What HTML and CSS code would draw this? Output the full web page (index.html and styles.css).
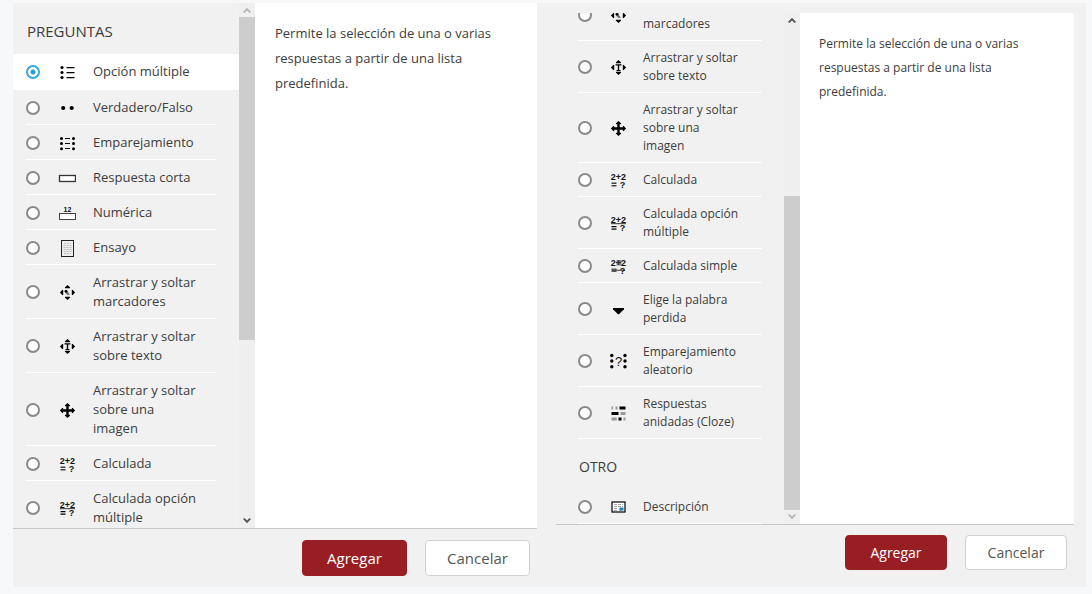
FILE: index.html
```html
<!DOCTYPE html>
<html lang="es">
<head>
<meta charset="utf-8">
<title>Agregar pregunta</title>
<link rel="stylesheet" href="styles.css">
</head>
<body>
<svg class="sprite" aria-hidden="true">
  <symbol id="multi" viewBox="-1 -1 18 18"><circle cx="3" cy="3.5" r="1.6"/><circle cx="3" cy="8.5" r="1.6"/><circle cx="3" cy="13.5" r="1.6"/><path d="M7.500 3h8v1.200h-8zM7.500 8h8v1.200h-8zM7.500 13h8v1.200h-8z"/></symbol>
  <symbol id="truefalse" viewBox="-1 -1 18 18"><circle cx="4.2" cy="8" r="2.1"/><circle cx="12.7" cy="8" r="2.1"/></symbol>
  <symbol id="match" viewBox="-1 -1 18 18"><circle cx="2.5" cy="3.5" r="1.5"/><circle cx="2.5" cy="8.5" r="1.5"/><circle cx="2.5" cy="13.8" r="1.5"/><circle cx="14.5" cy="3.5" r="1.5"/><circle cx="14.5" cy="8.5" r="1.5"/><circle cx="14.5" cy="13.8" r="1.5"/><path d="M6 3h5v1.100H6zM6 8h5v1.100H6zM6 13h5v1.100H6z"/></symbol>
  <symbol id="short" viewBox="-1 -1 18 18"><rect x=".5" y="5.5" width="16" height="6" fill="#fff" stroke="#333" stroke-width="1.3"/></symbol>
  <symbol id="numeric" viewBox="-1 -1 18 18"><rect x=".5" y="8.5" width="16" height="6" fill="#fff" stroke="#444"/><text x="8.5" y="7" text-anchor="middle" font-size="7">12</text></symbol>
  <symbol id="essay" viewBox="-1 -1 18 18"><rect x="2.5" y=".5" width="12" height="16" fill="#eee" stroke="#222"/><path d="M5 3.500h7M4.500 5.500h8M4.500 7.500h8M4.500 9.500h8M4.500 11.500h8M5 13.500h7" stroke="#bbb" stroke-dasharray="2 1"/></symbol>
  <symbol id="arrows" viewBox="0 0 16 16"><path d="M8 .4 10.700 3 10.200 3.700H5.800L5.300 3zM8 15.600 10.700 13 10.200 12.300H5.800L5.300 13zM.4 8 3 5.300 3.700 5.800v4.400l-.7.5zM15.600 8 13 5.300 12.300 5.800v4.400l.7.5z"/></symbol>
  <symbol id="ddmarker" viewBox="-1 -1 18 18"><use href="#arrows" x=".5" y=".5" width="16" height="16"/><path d="M5.500 6.500 8 6l1.500 3 1.500 1.500-2.500.5-2-2z" fill="#666"/><circle cx="7" cy="7.300" r="1.300"/></symbol>
  <symbol id="ddtext" viewBox="-1 -1 18 18"><use href="#arrows" x=".5" y=".5" width="16" height="16"/><path d="M5.500 5.300h6v1.200H9.200v5H7.800v-5H5.500zM6.500 11h4v1h-4z"/></symbol>
  <symbol id="ddimage" viewBox="-1 -1 18 18"><use href="#arrows" x=".5" y=".5" width="16" height="16"/><path d="M7.300 3h2.400v11H7.300zM3 7.300h11v2.400H3z"/></symbol>
  <symbol id="calc" viewBox="-1 -1 18 18"><text x="8.500" y="7.500" text-anchor="middle" font-size="9">2+2</text><path d="M1.500 10.500h5v1.500h-5zM1.500 13h5v1.500h-5z" fill="#444"/><text x="12.500" y="16" text-anchor="middle" font-size="9">?</text></symbol>
  <symbol id="calcmulti" viewBox="-1 -1 18 18"><text x="8.500" y="7.500" text-anchor="middle" font-size="9">2+2</text><path d="M1 8h15v1.200H1z" fill="#555"/><path d="M1.500 11h5v1.300h-5zM1.500 13.500h5v1.300h-5z"/><text x="12.500" y="16" text-anchor="middle" font-size="9">?</text></symbol>
  <symbol id="calcsimple" viewBox="-1 -1 18 18"><text x="8.500" y="7.500" text-anchor="middle" font-size="9">2+2</text><path d="M6.500 2h5v5.500h-5z" fill="#333" fill-opacity=".6"/><path d="M1.500 10.500h5v3.500h-5z" fill="#555"/><path d="M6 11.700h9v1.200H6z" fill="#555"/><text x="12.500" y="16" text-anchor="middle" font-size="9">?</text></symbol>
  <symbol id="select" viewBox="-1 -1 18 18"><path d="M3 7h11v1.200L9 13.200H8L3 8.200z"/></symbol>
  <symbol id="random" viewBox="-1 -1 18 18"><circle cx="1.800" cy="2.500" r="1.700"/><circle cx="1.800" cy="8" r="1.700"/><circle cx="1.800" cy="13.800" r="1.700"/><circle cx="15" cy="2.500" r="1.700"/><circle cx="15" cy="8" r="1.700"/><circle cx="15" cy="13.800" r="1.700"/><text class="thin" x="8.500" y="13" text-anchor="middle" font-size="13">?</text></symbol>
  <symbol id="cloze" viewBox="-1 -1 18 18"><path d="M9.500 1.500h6v3h-6zM1.500 7h7v3h-7zM8.500 12.500h3v3h-3z"/><path d="M1.500 1.500h1.700v3H1.500zM5.500 1.500h2v3h-2zM10.500 7h5v3h-5zM1.500 12.500h5.300v3H1.500zM13.500 12.500h2v3h-2z" fill="#999"/></symbol>
  <symbol id="desc" viewBox="-1 -1 18 18"><rect x="2" y="3" width="13" height="10" fill="#fff" stroke="#000" stroke-width="1.200"/><path d="M4 5.500h9M4 7.500h9M4 9.500h4M4 11.500h4" stroke="#aaa" stroke-dasharray="3 1"/><path d="M9.500 8.500h4v3h-4z" fill="#0d83c4"/><path d="M9.500 10.500h2v1h-2z" fill="#169455"/></symbol>
  <symbol id="up" viewBox="0 0 8 6"><path d="M0 5 4 .8 8 5 6.500 6 4 3.600 1.500 6z"/></symbol>
  <symbol id="down" viewBox="0 0 8 6"><path d="M0 1 4 5.200 8 1 6.500 0 4 2.400 1.500 0z"/></symbol>
</svg>

<main class="stage">
  <form class="dialog">
    <div class="dialog-body">
      <div class="sidebar">
        <h2 class="heading">PREGUNTAS</h2>
        <label class="option selected"><span class="line"><input type="radio" name="a" checked><svg class="icon"><use href="#multi"/></svg><span>Opción múltiple</span></span></label>
        <label class="option"><span class="line"><input type="radio" name="a"><svg class="icon"><use href="#truefalse"/></svg><span>Verdadero/Falso</span></span></label>
        <label class="option"><span class="line"><input type="radio" name="a"><svg class="icon"><use href="#match"/></svg><span>Emparejamiento</span></span></label>
        <label class="option"><span class="line"><input type="radio" name="a"><svg class="icon"><use href="#short"/></svg><span>Respuesta corta</span></span></label>
        <label class="option"><span class="line"><input type="radio" name="a"><svg class="icon"><use href="#numeric"/></svg><span>Numérica</span></span></label>
        <label class="option"><span class="line"><input type="radio" name="a"><svg class="icon"><use href="#essay"/></svg><span>Ensayo</span></span></label>
        <label class="option"><span class="line"><input type="radio" name="a"><svg class="icon"><use href="#ddmarker"/></svg><span>Arrastrar y soltar marcadores</span></span></label>
        <label class="option"><span class="line"><input type="radio" name="a"><svg class="icon"><use href="#ddtext"/></svg><span>Arrastrar y soltar sobre texto</span></span></label>
        <label class="option"><span class="line"><input type="radio" name="a"><svg class="icon"><use href="#ddimage"/></svg><span>Arrastrar y soltar sobre una imagen</span></span></label>
        <label class="option"><span class="line"><input type="radio" name="a"><svg class="icon"><use href="#calc"/></svg><span>Calculada</span></span></label>
        <label class="option"><span class="line"><input type="radio" name="a"><svg class="icon"><use href="#calcmulti"/></svg><span>Calculada opción múltiple</span></span></label>
      </div>
      <div class="scrollbar">
        <svg class="arrow dim"><use href="#up"/></svg>
        <div class="track at-top"><div class="thumb"></div></div>
        <svg class="arrow"><use href="#down"/></svg>
      </div>
      <div class="pane"><p class="help">Permite la selección de una o varias respuestas a partir de una lista predefinida.</p></div>
    </div>
    <div class="footer"><button type="button" class="btn primary">Agregar</button><button type="button" class="btn">Cancelar</button></div>
  </form>

  <form class="dialog compact">
    <div class="dialog-body">
      <div class="sidebar">
        <label class="option"><span class="line"><input type="radio" name="b"><svg class="icon"><use href="#ddmarker"/></svg><span>Arrastrar y soltar marcadores</span></span></label>
        <label class="option"><span class="line"><input type="radio" name="b"><svg class="icon"><use href="#ddtext"/></svg><span>Arrastrar y soltar sobre texto</span></span></label>
        <label class="option"><span class="line"><input type="radio" name="b"><svg class="icon"><use href="#ddimage"/></svg><span>Arrastrar y soltar sobre una imagen</span></span></label>
        <label class="option"><span class="line"><input type="radio" name="b"><svg class="icon"><use href="#calc"/></svg><span>Calculada</span></span></label>
        <label class="option"><span class="line"><input type="radio" name="b"><svg class="icon"><use href="#calcmulti"/></svg><span>Calculada opción múltiple</span></span></label>
        <label class="option"><span class="line"><input type="radio" name="b"><svg class="icon"><use href="#calcsimple"/></svg><span>Calculada simple</span></span></label>
        <label class="option"><span class="line"><input type="radio" name="b"><svg class="icon"><use href="#select"/></svg><span>Elige la palabra perdida</span></span></label>
        <label class="option"><span class="line"><input type="radio" name="b"><svg class="icon"><use href="#random"/></svg><span>Emparejamiento aleatorio</span></span></label>
        <label class="option"><span class="line"><input type="radio" name="b"><svg class="icon"><use href="#cloze"/></svg><span>Respuestas anidadas (Cloze)</span></span></label>
        <h2 class="heading">OTRO</h2>
        <label class="option"><span class="line"><input type="radio" name="b"><svg class="icon"><use href="#desc"/></svg><span>Descripción</span></span></label>
      </div>
      <div class="scrollbar">
        <svg class="arrow"><use href="#up"/></svg>
        <div class="track at-bottom"><div class="thumb"></div></div>
        <svg class="arrow dim"><use href="#down"/></svg>
      </div>
      <div class="pane"><p class="help">Permite la selección de una o varias respuestas a partir de una lista predefinida.</p></div>
    </div>
    <div class="footer"><button type="button" class="btn primary">Agregar</button><button type="button" class="btn">Cancelar</button></div>
  </form>
</main>
</body>
</html>
```
FILE: styles.css
```css
* { box-sizing: border-box; }
body {
  margin: 0;
  height: 100vh;
  padding: 3px 6px 7px 13px;
  background: #f6f8fa;
  color: #3c3c3c;
  font: 13px/19px "Open Sans", sans-serif;
}
.sprite { display: none; }
.sprite text { font-family: "Liberation Sans", sans-serif; font-weight: bold; fill: #111; }
.sprite .thin { font-weight: normal; }
.stage {
  display: grid;
  grid-template-columns: 524fr 518fr;
  grid-template-rows: minmax(0, 1fr);
  gap: 19px;
  height: 100%;
  padding-right: 12px;
  background: #f1f1f1;
}
.dialog { display: flex; flex-direction: column; min-width: 0; min-height: 0; }
.compact { padding-top: 10px; font-size: 12px; line-height: 18px; }
.dialog-body { flex: 1; display: flex; min-height: 0; border-bottom: 1px solid #c8c8c8; }
.sidebar { flex: 0 0 226px; overflow: hidden; }
.compact .sidebar { flex-basis: 228px; display: flex; flex-direction: column; justify-content: flex-end; }
.heading {
  flex: none;
  margin: 0;
  padding: 18px 0 13px 14px;
  font-size: 15px;
  font-weight: 400;
  line-height: 20px;
}
.compact .heading { padding-left: 23px; font-size: 14px; }
.option { display: block; flex: none; padding: 0 23px 0 13px; }
.compact .option { padding: 0 22px; }
.line {
  display: grid;
  grid-template-columns: 14px 53px 105px;
  align-items: center;
  padding: 8px 0 7px;
  border-bottom: 1px solid #fff;
}
.compact .line { grid-template-columns: 14px 51px 100px; }
.selected { background: #fff; padding-bottom: 1px; }
.option input {
  appearance: none;
  width: 14px;
  height: 14px;
  margin: 0;
  border: 2px solid #8a8a8a;
  border-radius: 50%;
  background: #fff;
}
.option input:checked {
  border-color: #3aa7df;
  background: radial-gradient(circle, #279bd8 2px, #fff 3px);
}
.icon { display: block; width: 18px; height: 18px; justify-self: center; }
.scrollbar {
  flex: 0 0 16px;
  display: flex;
  flex-direction: column;
  align-items: center;
  padding: 4px 0;
  background: #efefef;
}
.arrow { flex: none; width: 8px; height: 6px; fill: #555; }
.dim { fill: #b5b5b5; }
.track { flex: 1; display: flex; flex-direction: column; align-self: stretch; padding: 4px 0; }
.thumb { height: 65%; background: #cdcdcd; }
.at-bottom { justify-content: flex-end; }
.pane { flex: 1; min-width: 0; padding: 18px 20px; background: #fff; }
.compact .pane { padding: 19px; }
.help { max-width: 230px; margin: 0; line-height: 25px; }
.compact .help { max-width: 215px; line-height: 24px; }
.footer { display: flex; justify-content: flex-end; gap: 18px; padding: 11px 7px; }
.compact .footer { padding: 10px 7px 17px; }
.btn {
  width: 105px;
  height: 36px;
  padding: 0;
  border: 1px solid #d2d2d2;
  border-radius: 4px;
  background: #fff;
  color: #555;
  font: 15px/20px "Open Sans", sans-serif;
}
.compact .btn { width: 102px; height: 35px; font-size: 14px; }
.btn.primary { border-color: #981e24; background: #981e24; color: #fff; }
```
